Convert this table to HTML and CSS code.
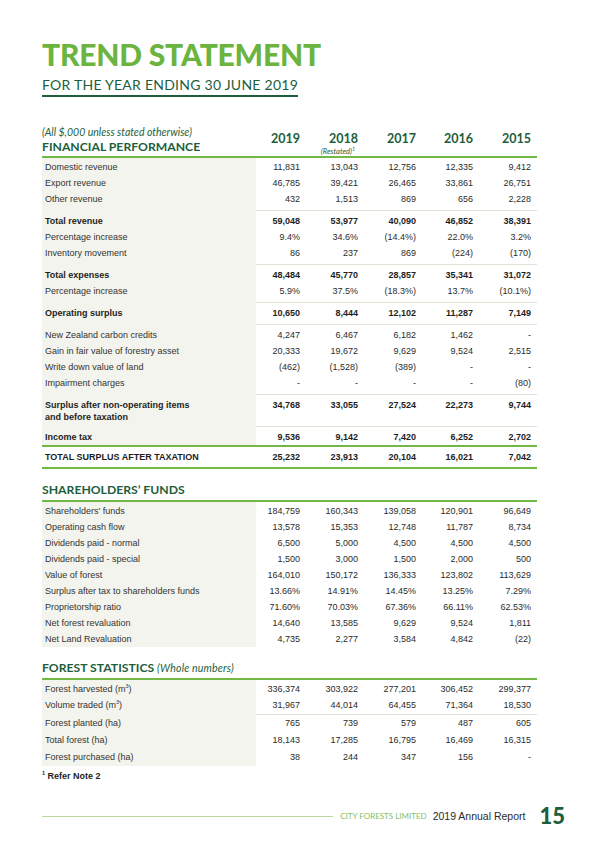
FILE: index.html
```html
<!DOCTYPE html>
<html lang="en">
<head>
    <meta charset="UTF-8">
    <meta name="viewport" content="width=device-width, initial-scale=1.0">
    <title>Trend Statement - City Forests Limited</title>
    <link rel="stylesheet" href="styles.css">
</head>
<body>
<div class="page">
    <h1 class="title">TREND STATEMENT</h1>
    <div class="subtitle">FOR THE YEAR ENDING 30 JUNE 2019</div>

    <table class="trend first-table">
        <colgroup><col class="c-label"><col class="c-first"><col class="c-year"><col class="c-year"><col class="c-mid"><col class="c-year"></colgroup>
        <thead>
            <tr class="head">
                <th class="label">
                    <div class="note">(All $,000 unless stated otherwise)</div>
                    <div class="section">FINANCIAL PERFORMANCE</div>
                </th>
                <th class="year">2019</th>
                <th class="year">2018<div class="restated">(Restated)<sup>1</sup></div></th>
                <th class="year">2017</th>
                <th class="year">2016</th>
                <th class="year">2015</th>
            </tr>
        </thead>
        <tbody>
            <tr class="first"><td class="label">Domestic revenue</td><td>11,831</td><td>13,043</td><td>12,756</td><td>12,335</td><td>9,412</td></tr>
            <tr><td class="label">Export revenue</td><td>46,785</td><td>39,421</td><td>26,465</td><td>33,861</td><td>26,751</td></tr>
            <tr class="end"><td class="label">Other revenue</td><td>432</td><td>1,513</td><td>869</td><td>656</td><td>2,228</td></tr>

            <tr class="top bold"><td class="label">Total revenue</td><td>59,048</td><td>53,977</td><td>40,090</td><td>46,852</td><td>38,391</td></tr>
            <tr><td class="label">Percentage increase</td><td>9.4%</td><td>34.6%</td><td>(14.4%)</td><td>22.0%</td><td>3.2%</td></tr>
            <tr class="end"><td class="label">Inventory movement</td><td>86</td><td>237</td><td>869</td><td>(224)</td><td>(170)</td></tr>

            <tr class="top bold"><td class="label">Total expenses</td><td>48,484</td><td>45,770</td><td>28,857</td><td>35,341</td><td>31,072</td></tr>
            <tr class="end"><td class="label">Percentage increase</td><td>5.9%</td><td>37.5%</td><td>(18.3%)</td><td>13.7%</td><td>(10.1%)</td></tr>

            <tr class="top end bold"><td class="label">Operating surplus</td><td>10,650</td><td>8,444</td><td>12,102</td><td>11,287</td><td>7,149</td></tr>

            <tr class="top"><td class="label">New Zealand carbon credits</td><td>4,247</td><td>6,467</td><td>6,182</td><td>1,462</td><td>-</td></tr>
            <tr><td class="label">Gain in fair value of forestry asset</td><td>20,333</td><td>19,672</td><td>9,629</td><td>9,524</td><td>2,515</td></tr>
            <tr><td class="label">Write down value of land</td><td>(462)</td><td>(1,528)</td><td>(389)</td><td>-</td><td>-</td></tr>
            <tr class="end"><td class="label">Impairment charges</td><td>-</td><td>-</td><td>-</td><td>-</td><td>(80)</td></tr>

            <tr class="top end bold two"><td class="label">Surplus after non-operating items<br>and before taxation</td><td>34,768</td><td>33,055</td><td>27,524</td><td>22,273</td><td>9,744</td></tr>

            <tr class="top bold"><td class="label">Income tax</td><td>9,536</td><td>9,142</td><td>7,420</td><td>6,252</td><td>2,702</td></tr>

            <tr class="total"><td class="label">TOTAL SURPLUS AFTER TAXATION</td><td>25,232</td><td>23,913</td><td>20,104</td><td>16,021</td><td>7,042</td></tr>
        </tbody>
    </table>

    <table class="trend">
        <colgroup><col class="c-label"><col class="c-first"><col class="c-year"><col class="c-year"><col class="c-mid"><col class="c-year"></colgroup>
        <thead>
            <tr class="sub-head"><th colspan="6">SHAREHOLDERS’ FUNDS</th></tr>
        </thead>
        <tbody>
            <tr class="first"><td class="label">Shareholders' funds</td><td>184,759</td><td>160,343</td><td>139,058</td><td>120,901</td><td>96,649</td></tr>
            <tr><td class="label">Operating cash flow</td><td>13,578</td><td>15,353</td><td>12,748</td><td>11,787</td><td>8,734</td></tr>
            <tr><td class="label">Dividends paid - normal</td><td>6,500</td><td>5,000</td><td>4,500</td><td>4,500</td><td>4,500</td></tr>
            <tr><td class="label">Dividends paid - special</td><td>1,500</td><td>3,000</td><td>1,500</td><td>2,000</td><td>500</td></tr>
            <tr><td class="label">Value of forest</td><td>164,010</td><td>150,172</td><td>136,333</td><td>123,802</td><td>113,629</td></tr>
            <tr><td class="label">Surplus after tax to shareholders funds</td><td>13.66%</td><td>14.91%</td><td>14.45%</td><td>13.25%</td><td>7.29%</td></tr>
            <tr><td class="label">Proprietorship ratio</td><td>71.60%</td><td>70.03%</td><td>67.36%</td><td>66.11%</td><td>62.53%</td></tr>
            <tr><td class="label">Net forest revaluation</td><td>14,640</td><td>13,585</td><td>9,629</td><td>9,524</td><td>1,811</td></tr>
            <tr><td class="label">Net Land Revaluation</td><td>4,735</td><td>2,277</td><td>3,584</td><td>4,842</td><td>(22)</td></tr>
        </tbody>
    </table>

    <table class="trend forest">
        <colgroup><col class="c-label"><col class="c-first"><col class="c-year"><col class="c-year"><col class="c-mid"><col class="c-year"></colgroup>
        <thead>
            <tr class="sub-head"><th colspan="6">FOREST STATISTICS <span class="whole">(Whole numbers)</span></th></tr>
        </thead>
        <tbody>
            <tr class="first"><td class="label">Forest harvested (m<sup>3</sup>)</td><td>336,374</td><td>303,922</td><td>277,201</td><td>306,452</td><td>299,377</td></tr>
            <tr class="end"><td class="label">Volume traded (m<sup>3</sup>)</td><td>31,967</td><td>44,014</td><td>64,455</td><td>71,364</td><td>18,530</td></tr>
            <tr class="top tall"><td class="label">Forest planted (ha)</td><td>765</td><td>739</td><td>579</td><td>487</td><td>605</td></tr>
            <tr class="tall"><td class="label">Total forest (ha)</td><td>18,143</td><td>17,285</td><td>16,795</td><td>16,469</td><td>16,315</td></tr>
            <tr class="tall"><td class="label">Forest purchased (ha)</td><td>38</td><td>244</td><td>347</td><td>156</td><td>-</td></tr>
        </tbody>
    </table>

    <div class="footnote"><sup>1</sup> Refer Note 2</div>

    <div class="footer">
        <div class="footer-line"></div>
        <span class="company">CITY FORESTS LIMITED</span>
        <span class="report">2019 Annual Report</span>
        <span class="page-no">15</span>
    </div>
</div>
</body>
</html>
```

FILE: styles.css
```css
body {
    margin: 0;
    padding: 0;
    background: #fff;
    font-family: "Liberation Sans", Arial, sans-serif;
    color: #2b2b2b;
}
.page {
    width: 495px;
    padding: 39px 59px 0 42px;
}
.title {
    margin: 0;
    font-family: Lato, sans-serif;
    font-weight: 900;
    font-size: 30px;
    line-height: 30px;
    letter-spacing: -0.2px;
    color: #6bb43f;
}
.subtitle {
    display: inline-block;
    margin-top: 9px;
    padding-bottom: 3px;
    border-bottom: 2px solid #1d5e3c;
    font-family: Lato, sans-serif;
    font-size: 14px;
    line-height: 14px;
    letter-spacing: 0.25px;
    color: #1d5e3c;
}
.trend {
    width: 495px;
    table-layout: fixed;
    border-collapse: separate;
    border-spacing: 0;
    font-size: 9px;
}
.c-label { width: 214px; }
.c-first { width: 50px; }
.c-year { width: 58px; }
.c-mid { width: 57px; }
.first-table {
    margin-top: 28px;
}
.trend td,
.trend th {
    padding: 0 6px 0 0;
    text-align: right;
    line-height: 16px;
    white-space: nowrap;
}
.trend .label {
    padding-left: 3px;
    text-align: left;
    background: #f3f4ed;
    color: #333;
}
.trend th.label {
    padding-left: 0;
    background: none;
}

/* header of the first block */
.head th {
    vertical-align: top;
    border-bottom: 2px solid #73b845;
    padding-bottom: 0;
}
.note {
    font-family: Lato, sans-serif;
    font-style: italic;
    font-weight: normal;
    font-size: 10.5px;
    line-height: 14px;
    color: #1d5e3c;
}
.section,
.sub-head th {
    font-family: Lato, sans-serif;
    font-weight: bold;
    font-size: 12.2px;
    line-height: 16px;
    color: #1d5e3c;
}
.head .year {
    padding-top: 6px;
    font-family: Lato, sans-serif;
    font-weight: bold;
    font-size: 12.5px;
    line-height: 16px;
    color: #1d5e3c;
}
.restated {
    font-style: italic;
    font-weight: normal;
    font-size: 7.5px;
    line-height: 9px;
    text-align: center;
    padding-left: 12px;
}
.restated sup {
    font-size: 5px;
}

/* row groups */
.first td {
    padding-top: 1px;
}
.top td {
    border-top: 1px solid #dfe4d6;
    padding-top: 2px;
}
.top td.label {
    border-top-color: transparent;
}
.end td {
    padding-bottom: 3px;
}
.bold td {
    font-weight: bold;
    color: #1e1e1e;
}
.bold td.label {
    color: #1e1e1e;
}
.two td {
    vertical-align: top;
    line-height: 12px;
    padding-top: 4px;
}
.forest .end td {
    padding-bottom: 1px;
}
.forest .top td {
    padding-top: 0;
}
.tall td {
    line-height: 17px;
}
.total td {
    border-top: 2px solid #73b845;
    border-bottom: 2px solid #73b845;
    line-height: 20px;
    font-weight: bold;
    color: #1e1e1e;
}
.total td.label {
    background: none;
    color: #1e1e1e;
}

/* section headings */
.sub-head th {
    text-align: left;
    padding: 0 0 2px 0;
    border-bottom: 2px solid #73b845;
}
.trend + .trend {
    margin-top: 13px;
}
.whole {
    font-style: italic;
    font-weight: normal;
    font-size: 10.5px;
    letter-spacing: 0.2px;
}
.trend sup {
    font-size: 5.5px;
    line-height: 0;
}

.footnote {
    margin-top: 4px;
    font-size: 9px;
    line-height: 12px;
    font-weight: bold;
    color: #1e1e1e;
}
.footnote sup {
    font-size: 5.5px;
    line-height: 0;
}

.footer {
    display: flex;
    align-items: center;
    width: 523px;
    margin-top: 23px;
}
.footer-line {
    flex: 1;
    height: 1px;
    background: #b8da9e;
    margin-right: 7px;
}
.company {
    font-family: Lato, sans-serif;
    font-size: 8px;
    color: #86c060;
    margin-right: 6px;
}
.report {
    font-size: 10.5px;
    color: #2b2b2b;
    margin-right: 14px;
}
.page-no {
    font-family: Lato, sans-serif;
    font-weight: 900;
    font-size: 22px;
    line-height: 22px;
    color: #1d5e3c;
}
```
